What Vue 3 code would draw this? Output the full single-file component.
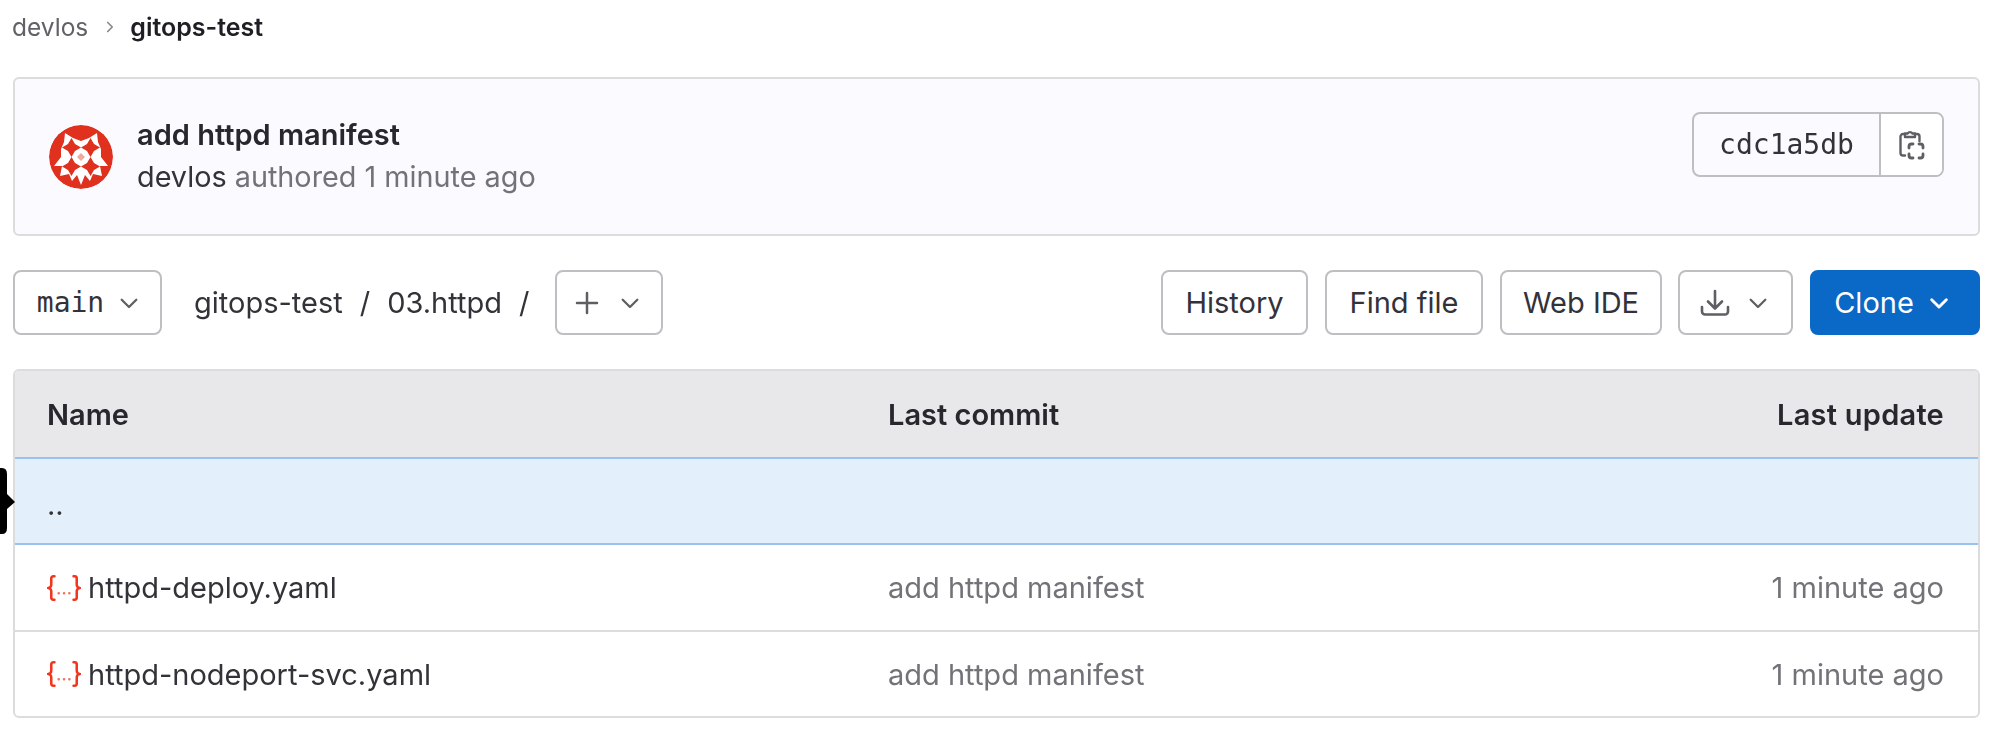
<template>
  <div class="page">
    <svg class="marker" viewBox="0 0 15 66" aria-hidden="true"><path d="M0 0 H2 Q7 0 7 6 V26 L15 34 L7 41 V60 Q7 66 2 66 H0 Z" fill="#000"/></svg>
    <nav class="crumbs">
      <span class="crumb-parent">devlos</span>
      <svg class="crumb-sep" viewBox="0 0 16 16"><path d="M6 4l4 4-4 4" fill="none" stroke="#89888d" stroke-width="1.5" stroke-linecap="round" stroke-linejoin="round"/></svg>
      <strong class="crumb-current">gitops-test</strong>
    </nav>

    <section class="commit">
      <svg class="avatar" viewBox="-32 -32 64 64">
        <circle r="32" fill="#e0301e"/>
        <path fill="#fff" d="M0-16 8-19 16-24 17-15 20-8 20 0 27 9 19 9 21 19 12 17 9 24 4 18 0 28-4 18-9 24-12 17-21 19-19 9-27 9-20 0-20-8-17-15-16-24-8-19Z"/>
        <g fill="#e0301e">
          <path d="M0-28 7-19 2-20 0-18-2-20-7-19Z"/>
          <path transform="translate(-9.500 -9.500)" d="M0-9.500 3.500-3.500 9.500 0 3.500 3.500 0 9.500-3.500 3.500-9.500 0-3.500-3.500Z"/>
          <path transform="translate(9.500 -9.500)" d="M0-9.500 3.500-3.500 9.500 0 3.500 3.500 0 9.500-3.500 3.500-9.500 0-3.500-3.500Z"/>
          <path transform="translate(-9.500 9.500)" d="M0-9.500 3.500-3.500 9.500 0 3.500 3.500 0 9.500-3.500 3.500-9.500 0-3.500-3.500Z"/>
          <path transform="translate(9.500 9.500)" d="M0-9.500 3.500-3.500 9.500 0 3.500 3.500 0 9.500-3.500 3.500-9.500 0-3.500-3.500Z"/>
        </g>
        <path fill="#f3a89d" d="M0-4 4 0 0 4-4 0Z"/>
      </svg>
      <div class="commit-text">
        <div class="commit-title">add httpd manifest</div>
        <div class="commit-meta"><span class="commit-author">devlos</span> authored 1 minute ago</div>
      </div>
      <div class="sha-group">
        <span class="sha">cdc1a5db</span>
        <button class="sha-copy">
          <svg class="icon-copy" viewBox="0 0 26 32" fill="none" stroke="#5f5e64" stroke-width="2.400" stroke-linecap="round" stroke-linejoin="round">
            <path d="M6 5H4a2.500 2.500 0 0 0-2.500 2.500V24A2.500 2.500 0 0 0 4 26.500h2"/>
            <path d="M16 5h2a2.500 2.500 0 0 1 2.500 2.500V12"/>
            <path d="M6 8V4.500h2.500a3 3 0 0 1 5 0H16V8z"/>
            <path stroke-width="2.800" d="M10 19v-1.500a2.500 2.500 0 0 1 2.500-2.500H14M20 15h1.500a2.500 2.500 0 0 1 2.500 2.500V19M24 25v1.500a2.500 2.500 0 0 1-2.500 2.500H20M14 29h-1.500a2.500 2.500 0 0 1-2.500-2.500V25"/>
          </svg>
        </button>
      </div>
    </section>

    <div class="toolbar">
      <div class="tool-left">
        <button class="btn branch"><span class="mono">main</span><svg class="chev" viewBox="0 0 16 16"><path d="M3.500 6l4.500 4.500L12.500 6"/></svg></button>
        <div class="path">
          <span>gitops-test</span><span class="slash">/</span><span>03.httpd</span><span class="slash">/</span>
        </div>
        <button class="btn add">
          <svg class="plus" viewBox="0 0 24 24"><path d="M12 2v20M2 12h20"/></svg>
          <svg class="chev" viewBox="0 0 16 16"><path d="M3.500 6l4.500 4.500L12.500 6"/></svg>
        </button>
      </div>
      <div class="tool-right">
        <button class="btn history">History</button>
        <button class="btn find">Find file</button>
        <button class="btn ide">Web IDE</button>
        <button class="btn download">
          <svg class="dl" viewBox="0 0 30 28" fill="none" stroke="#5f5e64" stroke-width="2.600" stroke-linecap="round" stroke-linejoin="round"><path d="M15 2v17M8 12.500l7 7 7-7M2 18v4.500A3 3 0 0 0 5 25.500h20a3 3 0 0 0 3-3V18"/></svg>
          <svg class="chev" viewBox="0 0 16 16"><path d="M3.500 6l4.500 4.500L12.500 6"/></svg>
        </button>
        <button class="btn clone">Clone<svg class="chev" viewBox="0 0 16 16"><path d="M3.500 6l4.500 4.500L12.500 6"/></svg></button>
      </div>
    </div>

    <div class="tree">
      <div class="row head">
        <div class="c-name">Name</div><div class="c-commit">Last commit</div><div class="c-date">Last update</div>
      </div>
      <div class="row up"><div class="c-name dots">..</div></div>
      <div v-for="f in files" :key="f" class="row file">
        <div class="c-name">
          <svg class="yaml" viewBox="0 0 32 26" fill="none" stroke="#f2351c" stroke-width="2.400" stroke-linecap="round" stroke-linejoin="round">
            <path d="M7 2H6a2 2 0 0 0-2 2v6a3 3 0 0 1-3 3 3 3 0 0 1 3 3v6a2 2 0 0 0 2 2h1"/>
            <path d="M25 2h1a2 2 0 0 1 2 2v6a3 3 0 0 0 3 3 3 3 0 0 0-3 3v6a2 2 0 0 1-2 2h-1"/>
            <path d="M11 18h.1M16 18h.1M21 18h.1" stroke-opacity=".7"/>
          </svg>
          <span>{{ f }}</span>
        </div>
        <div class="c-commit muted">add httpd manifest</div>
        <div class="c-date muted">1 minute ago</div>
      </div>
    </div>
  </div>
</template>

<script setup>
const files = ['httpd-deploy.yaml', 'httpd-nodeport-svc.yaml']
</script>

<style>
html, body { background: #fff; margin: 0; }
</style>

<style scoped>
.page {
  position: relative;
  box-sizing: border-box;
  width: 2000px;
  height: 737px;
  padding: 0 20px 0 13px;
  font-family: Inter, "Liberation Sans", sans-serif;
  font-size: 29px;
  color: #333238;
  overflow: hidden;
  filter: blur(0.5px);
}
.marker { position: absolute; left: 0; top: 468px; width: 15px; height: 66px; z-index: 1; }
.crumbs { display: flex; align-items: center; height: 53px; margin-left: -1px; font-size: 24.500px; }
.crumb-parent { color: #626168; }
.crumb-sep { width: 18px; height: 18px; margin: 0 11px 0 13px; }
.crumb-current { color: #1f1e24; font-weight: 600; font-size: 25px; }

.commit {
  box-sizing: border-box;
  margin-top: 24px;
  height: 159px;
  display: flex;
  align-items: center;
  padding: 0 34px;
  background: #fafaff;
  border: 2px solid #dcdcde;
  border-radius: 6px;
}
.avatar { width: 64px; height: 64px; flex: none; border-radius: 50%; }
.commit-text { margin-left: 24px; flex: 1; }
.commit-title { font-weight: 600; color: #28272d; line-height: 40px; }
.commit-meta { color: #737278; line-height: 43px; font-size: 28.800px; }
.commit-author { color: #333238; }
.sha-group {
  display: flex;
  align-self: flex-start;
  margin-top: 33px;
  height: 65px;
  box-sizing: border-box;
  border: 2px solid #bfbfc3;
  border-radius: 8px;
  overflow: hidden;
}
.sha {
  width: 185px;
  display: flex;
  align-items: center;
  justify-content: center;
  font-family: "DejaVu Sans Mono", "Liberation Mono", monospace;
  font-size: 28px;
  color: #333238;
}
.sha-copy {
  width: 63px;
  padding: 0;
  background: #fff;
  border: 0;
  border-left: 2px solid #bfbfc3;
  display: flex;
  align-items: center;
  justify-content: center;
}
.icon-copy { width: 26px; height: 32px; }

.toolbar { display: flex; justify-content: space-between; margin-top: 34px; height: 65px; }
.tool-left, .tool-right { display: flex; align-items: stretch; }
.tool-right { gap: 17px; }
.btn {
  box-sizing: border-box;
  display: flex;
  align-items: center;
  justify-content: center;
  padding: 0;
  background: #fff;
  border: 2px solid #bfbfc3;
  border-radius: 8px;
  font: inherit;
  color: #333238;
}
.chev { width: 26px; height: 26px; fill: none; stroke: #5f5e64; stroke-width: 1.400; stroke-linecap: round; stroke-linejoin: round; }
.mono { font-family: "DejaVu Sans Mono", "Liberation Mono", monospace; font-size: 28px; }
.branch { width: 149px; gap: 12px; padding-left: 4px; }
.path { display: flex; align-items: center; margin-left: 32px; width: 361px; }
.slash { margin: 0 17px; }
.add { width: 108px; gap: 18px; }
.plus { width: 24px; height: 24px; fill: none; stroke: #5f5e64; stroke-width: 2.500; stroke-linecap: round; }
.history { width: 147px; }
.find { width: 158px; }
.ide { width: 162px; }
.download { width: 115px; gap: 15px; margin-left: -1px; }
.dl { width: 30px; height: 28px; }
.clone { width: 170px; gap: 12px; padding-right: 4px; background: #0a68c6; border-color: #0a68c6; color: #fff; }
.clone .chev { stroke: #fff; stroke-width: 1.800; }

.tree {
  box-sizing: border-box;
  margin-top: 34px;
  height: 349px;
  border: 2px solid #dcdcde;
  border-radius: 6px;
  overflow: hidden;
}
.row { box-sizing: border-box; display: flex; align-items: center; padding: 0 34px 0 32px; height: 85px; }
.row.head { height: 88px; background: #e8e8ea; font-weight: 600; color: #28272d; border-bottom: 2px solid #97c3ee; }
.row.head .c-date { letter-spacing: 0.25px; }
.row.up { height: 86px; background: #e3f0fc; border-bottom: 2px solid #97c3ee; }
.row.file + .row.file { height: 86px; border-top: 2px solid #dcdcde; }
.c-name { width: 841px; display: flex; align-items: center; gap: 7px; }
.c-commit { flex: 1; }
.c-date { text-align: right; }
.muted { color: #737278; }
.dots { padding-top: 6px; }
.yaml { width: 34px; height: 28px; flex: none; }
</style>
